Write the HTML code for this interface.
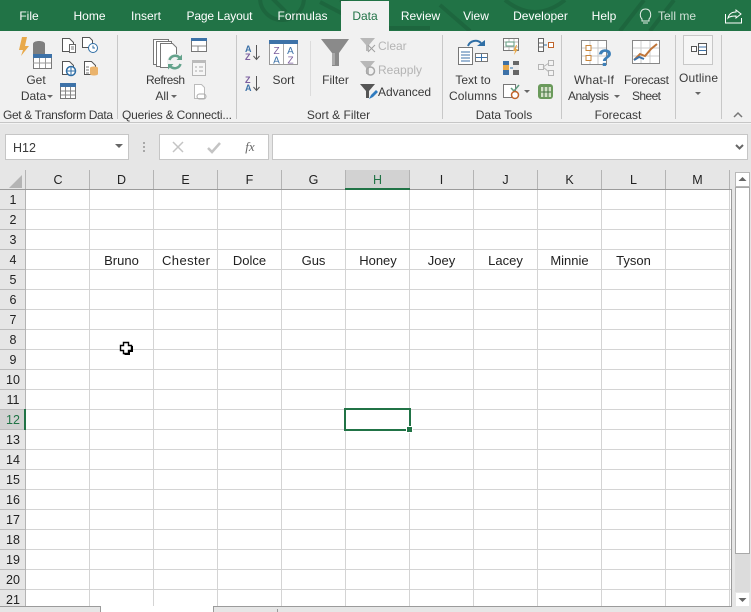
<!DOCTYPE html>
<html><head><meta charset="utf-8"><style>
html,body{margin:0;padding:0;background:#fff;width:751px;height:612px;overflow:hidden}
svg{display:block}
text{font-family:"Liberation Sans",sans-serif;font-size:12px;fill:#3a3a3a}
.t text{fill:#fff;font-size:12px;text-anchor:middle}
.c{text-anchor:middle}
.d{fill:#b4b4b4}
.h{font-size:12.5px;fill:#222;text-anchor:middle}
.cell{font-size:13px;fill:#222;text-anchor:middle}
.g{stroke:#d4d4d4;stroke-width:1}
</style></head><body>
<svg width="751" height="612" viewBox="0 0 751 612" xmlns="http://www.w3.org/2000/svg">
<rect width="751" height="612" fill="#fff"/>
<!-- title -->
<rect width="751" height="31" fill="#217346"/>
<g fill="none" stroke="#1d663e" stroke-width="4">
<circle cx="282" cy="-2" r="22"/><path d="M270 -4l16 16M320 2l50 26h60M340 0l40 12M440 5l30 26"/><path d="M505 0q30 24 60 0M620 31l24-31M650 31l24-31"/>
</g>
<rect x="341" y="1" width="48" height="31" fill="#f1f1f1"/>
<g class="t">
<text x="29" y="20">File</text><text x="89.500" y="20">Home</text><text x="146" y="20">Insert</text><text x="219.500" y="20" textLength="66">Page Layout</text><text x="302.500" y="20">Formulas</text>
<text x="365" y="20" style="fill:#217346">Data</text><text x="420.500" y="20">Review</text><text x="476" y="20">View</text><text x="540.500" y="20">Developer</text><text x="604" y="20">Help</text><text x="677" y="20" style="fill:#cfe0d6">Tell me</text>
</g>
<path d="M642 19c-3-3-2-10 3.500-10s6.500 7 3.500 10v2h-7zM643 23h5" fill="none" stroke="#e4efe8"/>
<path d="M725.500 14v9h16v-5M728 18c1-4 4-6 8-6v-2l5 4-5 4v-2c-3 0-6 0-8 2z" fill="none" stroke="#fff"/>
<!-- ribbon -->
<rect y="31" width="751" height="92" fill="#f1f1f1"/>
<rect y="122" width="751" height="1" fill="#c6c6c6"/>
<rect y="123" width="751" height="1" fill="#f4f4f4"/>
<g fill="#c8c8c8"><rect x="117" y="35" width="1" height="84"/><rect x="236" y="35" width="1" height="84"/><rect x="442" y="35" width="1" height="84"/><rect x="561" y="35" width="1" height="84"/><rect x="675" y="35" width="1" height="84"/><rect x="721" y="35" width="1" height="84"/><rect x="310" y="41" width="1" height="55" fill="#dcdcdc"/></g>
<!-- get data -->
<path d="M27 37h-5l-3 13h4l-2 6 8-10h-4z" fill="#e8a94a"/>
<path d="M33 44c0-4 12-4 12 0v17H33z" fill="#7f7f7f"/>
<rect x="33.500" y="54.500" width="18" height="14" fill="#fff" stroke="#7a7a7a"/><rect x="33" y="54" width="19" height="4" fill="#3d72a8"/>
<path d="M33 63h18M39.500 58v10M45.500 58v10" stroke="#999" fill="none"/>
<g fill="#fff" stroke="#555"><path d="M62.500 38.500h7l4 4v9h-11z"/><path d="M82.500 37.500h7l3 3v7h-10z"/><path d="M62.500 61.500h7l4 4v9h-11z"/><path d="M84.500 61.500h7l4 4v9h-11z"/></g>
<rect x="69.500" y="44.500" width="6" height="8" fill="#fff" stroke="#666"/><path d="M71 47h3M71 49h3" stroke="#777"/>
<circle cx="93" cy="48" r="4.500" fill="#fff" stroke="#2f6ea5"/><path d="M93 45.500V48h2" stroke="#2f6ea5" fill="none"/>
<circle cx="71" cy="71" r="4.500" fill="#fff" stroke="#2f6ea5" stroke-width="1.500"/><path d="M66.500 71h9M71 66.500v9" stroke="#2f6ea5"/>
<path d="M86 67h3M86 70h3M86 73h3" stroke="#777"/><path d="M90 68c0-2 8-2 8 0v6c0 2-8 2-8 0z" fill="#eab36c"/>
<rect x="60.500" y="83.500" width="15" height="15" fill="#fff" stroke="#777"/><rect x="60" y="83" width="16" height="4" fill="#3d72a8"/><path d="M61 91h14M61 95h14M65.500 87v11M70.500 87v11" stroke="#888"/>
<text x="36" y="84" class="c">Get</text><text x="33.500" y="100" class="c">Data</text><path d="M47 95h6l-3 3z" fill="#666"/>
<text x="58" y="119" class="c" textLength="110" style="font-size:12px">Get &amp; Transform Data</text>
<!-- refresh -->
<g fill="#fff" stroke="#777"><rect x="153.500" y="39.500" width="15" height="25"/><rect x="156.500" y="41.500" width="15" height="25"/><path d="M160.500 43.500h12l4 4v20h-16z"/></g>
<circle cx="175" cy="62" r="8" fill="#f1f1f1"/>
<path d="M169.500 60a6 6 0 0 1 10-2.500" fill="none" stroke="#63a28b" stroke-width="2.500"/><path d="M176.500 60h5.500v-5.500z" fill="#63a28b"/>
<path d="M180.500 64a6 6 0 0 1-10 2.500" fill="none" stroke="#63a28b" stroke-width="2.500"/><path d="M173.500 64H168v5.500z" fill="#63a28b"/>
<rect x="191.500" y="38.500" width="15" height="13" fill="#fff" stroke="#777"/><rect x="191" y="38" width="16" height="3" fill="#3d72a8"/><path d="M192 46h14M198 46v5" stroke="#888"/>
<rect x="192.500" y="60.500" width="13" height="15" fill="#f6f6f6" stroke="#b5b5b5"/><rect x="192" y="60" width="14" height="3" fill="#bbb"/><path d="M195 67h2M199 67h4M195 71h2M199 71h4" stroke="#aaa"/>
<path d="M194.500 84.500h7l3 3v11h-10z" fill="#fff" stroke="#bbb"/><rect x="197" y="94" width="9" height="5" rx="2.500" fill="none" stroke="#aaa"/>
<text x="165.500" y="84" class="c" textLength="39">Refresh</text><text x="162" y="100" class="c">All</text><path d="M171 95h6l-3 3z" fill="#666"/>
<text x="177" y="119" class="c" textLength="110">Queries &amp; Connecti...</text>
<!-- sort -->
<g style="font-weight:bold"><text x="245" y="52" style="font-size:9px;fill:#3d72a8;font-weight:bold">A</text><text x="245" y="60" style="font-size:9px;fill:#7b5e9e;font-weight:bold">Z</text><text x="245" y="83" style="font-size:9px;fill:#7b5e9e;font-weight:bold">Z</text><text x="245" y="91" style="font-size:9px;fill:#3d72a8;font-weight:bold">A</text></g>
<path d="M256.500 45v14M253.500 56l3 3.500 3-3.500M256.500 76v14M253.500 87l3 3.500 3-3.500" fill="none" stroke="#555"/>
<rect x="269.500" y="40.500" width="28" height="24" fill="#fff" stroke="#999"/><rect x="269" y="40" width="29" height="4" fill="#3d72a8"/><path d="M283.500 44v20" stroke="#aaa"/>
<text x="276.500" y="54" class="c" style="font-size:10px;fill:#7b5e9e">Z</text><text x="276.500" y="63.500" class="c" style="font-size:10px;fill:#3d72a8">A</text><text x="290.500" y="54" class="c" style="font-size:10px;fill:#3d72a8">A</text><text x="290.500" y="63.500" class="c" style="font-size:10px;fill:#7b5e9e">Z</text>
<text x="283.500" y="84" class="c">Sort</text>
<path d="M321 39h28l-10 14v13h-7V53z" fill="#8a8a8a"/><path d="M332 53h3v12h-3z" fill="#aaa"/>
<text x="335.500" y="84" class="c">Filter</text>
<path d="M360 38h15l-6 7v6h-3v-6z" fill="#b8b8b8"/><path d="M368 45l7 7m0-7l-7 7" stroke="#a0a0a0"/>
<path d="M360 61h15l-6 7v6h-3v-6z" fill="#b8b8b8"/><circle cx="370.500" cy="71" r="4" fill="none" stroke="#a8a8a8" stroke-width="1.500"/>
<path d="M360 84h15l-6 7v7h-3v-7z" fill="#555"/><path d="M369 99l2-4 5-5 2 2-5 5z" fill="#2f7bbf"/>
<text x="378" y="50" class="d">Clear</text><text x="378" y="74" class="d">Reapply</text><text x="378" y="96" textLength="53">Advanced</text>
<text x="338.500" y="119" class="c">Sort &amp; Filter</text>
<!-- data tools -->
<rect x="458.500" y="47.500" width="14" height="17" fill="#fff" stroke="#777"/><path d="M461 52h9M461 55h9M461 58h9M461 61h9" stroke="#3d72a8"/>
<rect x="475.500" y="53.500" width="12" height="8" fill="#fff" stroke="#777"/><path d="M476 57.500h11M481.500 54v7" stroke="#3d72a8"/>
<path d="M468 46a8 8 0 0 1 13-3" fill="none" stroke="#2f6ea5" stroke-width="2"/><path d="M477 46h8v-6z" fill="#2f6ea5"/>
<text x="473" y="84" class="c">Text to</text><text x="473" y="100" class="c" textLength="48">Columns</text>
<rect x="503.500" y="38.500" width="15" height="12" fill="#fff" stroke="#777"/><path d="M504 42h14M504 47h14M509 39v11M514 39v11" stroke="#bbb"/><rect x="506" y="42" width="8" height="4" fill="#fff" stroke="#5f9b7f"/><path d="M516 45l-3 6h2l-1 4 4-6h-2l1-4z" fill="#e8a94a"/>
<rect x="503" y="61" width="6" height="14" fill="#3d72a8"/><rect x="513" y="61" width="6" height="14" fill="#666"/><rect x="503" y="65" width="6" height="5" fill="#e8a94a"/><rect x="513" y="65" width="6" height="5" fill="#e8e8e8"/><path d="M510 68h3" stroke="#2f6ea5"/>
<rect x="503.500" y="84.500" width="12" height="13" fill="#fff" stroke="#777"/><path d="M511 88l3 3 5-6" fill="none" stroke="#5f9b7f" stroke-width="1.500"/><circle cx="515" cy="95" r="3.500" fill="#fff" stroke="#c0642b" stroke-width="1.500"/>
<path d="M524 90h6l-3 3z" fill="#666"/>
<rect x="538.500" y="38.500" width="5" height="13" fill="#fff" stroke="#666"/><path d="M539 43h4M539 47h4" stroke="#666"/><rect x="548.500" y="42.500" width="5" height="5" fill="#fff" stroke="#c0642b"/><path d="M544 45h3" stroke="#2f6ea5"/>
<g fill="#f3f3f3" stroke="#b5b5b5"><rect x="538.500" y="64.500" width="5" height="5"/><rect x="548.500" y="60.500" width="5" height="5"/><rect x="548.500" y="70.500" width="5" height="5"/></g><path d="M543 67l6-4M543 67l6 5" stroke="#b5b5b5"/>
<rect x="538" y="84" width="15" height="15" rx="3" fill="#6a9a5b"/><rect x="541" y="87" width="10" height="10" fill="#d4e2c8"/><path d="M544 87v10M548 87v10M541 92h10" stroke="#3f6f3a"/>
<text x="504" y="119" class="c">Data Tools</text>
<!-- forecast -->
<rect x="581.500" y="40.500" width="25" height="24" fill="#fff" stroke="#888"/><path d="M582 48h24M582 56h24M590 41v23M598 41v23" stroke="#c8c8c8"/><rect x="586" y="45.500" width="5" height="5" fill="#fff" stroke="#c8843a"/><rect x="586" y="55.500" width="5" height="5" fill="#fff" stroke="#c8843a"/>
<text x="605" y="66" class="c" style="font-size:24px;font-weight:bold;fill:#3d7fb8">?</text>
<text x="594" y="84" class="c" textLength="40">What-If</text><text x="588.500" y="100" class="c" textLength="41">Analysis</text><path d="M614 95h6l-3 3z" fill="#666"/>
<rect x="632.500" y="40.500" width="27" height="23" fill="#fff" stroke="#888"/><path d="M633 48h26M633 56h26M641 41v22M650 41v22" stroke="#ccc"/>
<path d="M634 60l6-6 5 2 6-7 6-5" fill="none" stroke="#c0763a" stroke-width="2"/><path d="M634 60l5-3 5 2" fill="none" stroke="#3d72a8" stroke-width="2"/>
<text x="646.500" y="84" class="c" textLength="45">Forecast</text><text x="646.500" y="100" class="c" textLength="29">Sheet</text>
<text x="618" y="119" class="c">Forecast</text>
<!-- outline -->
<rect x="683.500" y="35.500" width="29" height="29" fill="#f6f6f6" stroke="#c8c8c8"/>
<rect x="691.500" y="46.500" width="5" height="5" fill="#fff" stroke="#555"/><rect x="698.500" y="43.500" width="8" height="11" fill="#fff" stroke="#555"/><path d="M699 47h7M699 50.500h7" stroke="#3d72a8"/>
<text x="698.500" y="82" class="c" textLength="39">Outline</text><path d="M695 92h6l-3 3z" fill="#666"/>
<path d="M734 117l4-4 4 4" fill="none" stroke="#777" stroke-width="1.500"/>
<!-- formula bar -->
<rect y="124" width="751" height="482" fill="#e6e6e6"/>
<rect x="5.500" y="134.500" width="123" height="25" fill="#fff" stroke="#c6c6c6"/>
<text x="13" y="152" style="font-size:12.500px">H12</text><path d="M115 144h8l-4 4z" fill="#666"/>
<g fill="#a8a8a8"><rect x="143" y="142" width="2" height="2"/><rect x="143" y="146" width="2" height="2"/><rect x="143" y="150" width="2" height="2"/></g>
<rect x="159.500" y="134.500" width="109" height="25" fill="#fff" stroke="#c6c6c6"/>
<path d="M173 142l10 10m0-10l-10 10" stroke="#c4c4c4" stroke-width="1.500"/><path d="M208 148l4 4 8-9" fill="none" stroke="#c4c4c4" stroke-width="2.500"/>
<text x="250" y="151" class="c" style="font-family:'Liberation Serif',serif;font-style:italic;font-size:13px;fill:#666">fx</text>
<rect x="272.500" y="134.500" width="475" height="25" fill="#fff" stroke="#c6c6c6"/><path d="M736 145l3.500 3.500 3.500-3.500" fill="none" stroke="#666" stroke-width="2"/>
<!-- grid -->
<rect x="26" y="190" width="705" height="416" fill="#fff"/>
<g class="g" fill="none">
<path d="M89.500 190V606M153.500 190V606M217.500 190V606M281.500 190V606M345.500 190V606M409.500 190V606M473.500 190V606M537.500 190V606M601.500 190V606M665.500 190V606M729.500 190V606"/>
<path d="M26 209.500H731M26 229.500H731M26 249.500H731M26 269.500H731M26 289.500H731M26 309.500H731M26 329.500H731M26 349.500H731M26 369.500H731M26 389.500H731M26 409.500H731M26 429.500H731M26 449.500H731M26 469.500H731M26 489.500H731M26 509.500H731M26 529.500H731M26 549.500H731M26 569.500H731M26 589.500H731"/>
</g>
<!-- col headers -->
<path d="M9 188H22V175z" fill="#b4b4b4"/>
<path d="M25.500 170V606M89.500 170V189M153.500 170V189M217.500 170V189M281.500 170V189M345.500 170V189M409.500 170V189M473.500 170V189M537.500 170V189M601.500 170V189M665.500 170V189M729.500 170V189" stroke="#b4b4b4" fill="none"/>
<rect x="0" y="189" width="731.500" height="1" fill="#9b9b9b"/><rect x="731" y="189" width="1" height="418" fill="#9b9b9b"/><rect x="0" y="606" width="732" height="1" fill="#9b9b9b"/>
<rect x="346" y="170" width="63" height="19" fill="#d2d2d2"/><rect x="345" y="188" width="65" height="2" fill="#217346"/>
<text x="58" y="184" class="h">C</text><text x="121.500" y="184" class="h">D</text><text x="185.500" y="184" class="h">E</text><text x="249.500" y="184" class="h">F</text><text x="313.500" y="184" class="h">G</text><text x="377.500" y="184" class="h" style="fill:#217346">H</text><text x="441.500" y="184" class="h">I</text><text x="505.500" y="184" class="h">J</text><text x="569.500" y="184" class="h">K</text><text x="633.500" y="184" class="h">L</text><text x="697.500" y="184" class="h">M</text>
<!-- row headers -->
<path d="M0 209.500H25M0 229.500H25M0 249.500H25M0 269.500H25M0 289.500H25M0 309.500H25M0 329.500H25M0 349.500H25M0 369.500H25M0 389.500H25M0 409.500H25M0 429.500H25M0 449.500H25M0 469.500H25M0 489.500H25M0 509.500H25M0 529.500H25M0 549.500H25M0 569.500H25M0 589.500H25" stroke="#bcbcbc"/>
<rect x="0" y="410" width="24" height="19" fill="#d2d2d2"/><rect x="24" y="409" width="2" height="21" fill="#217346"/>
<g>
<text x="13" y="204" class="h">1</text><text x="13" y="224" class="h">2</text><text x="13" y="244" class="h">3</text><text x="13" y="264" class="h">4</text><text x="13" y="284" class="h">5</text><text x="13" y="304" class="h">6</text><text x="13" y="324" class="h">7</text><text x="13" y="344" class="h">8</text><text x="13" y="364" class="h">9</text><text x="13" y="384" class="h">10</text><text x="13" y="404" class="h">11</text><text x="13" y="424" class="h" style="fill:#217346">12</text><text x="13" y="444" class="h">13</text><text x="13" y="464" class="h">14</text><text x="13" y="484" class="h">15</text><text x="13" y="504" class="h">16</text><text x="13" y="524" class="h">17</text><text x="13" y="544" class="h">18</text><text x="13" y="564" class="h">19</text><text x="13" y="584" class="h">20</text><text x="13" y="604" class="h">21</text>
</g>
<!-- cells -->
<text x="121.500" y="265" class="cell">Bruno</text><text x="186" y="265" class="cell" textLength="48">Chester</text><text x="249.500" y="265" class="cell">Dolce</text><text x="313.500" y="265" class="cell">Gus</text><text x="378" y="265" class="cell">Honey</text><text x="441.500" y="265" class="cell">Joey</text><text x="505.500" y="265" class="cell">Lacey</text><text x="569.500" y="265" class="cell">Minnie</text><text x="633.500" y="265" class="cell">Tyson</text>
<!-- selection -->
<rect x="345" y="409" width="65" height="21" fill="none" stroke="#217346" stroke-width="2"/>
<rect x="406" y="426" width="7" height="7" fill="#fff"/><rect x="407" y="427" width="5" height="5" fill="#217346"/>
<!-- cursor -->
<path d="M123.500 342.500h5v3h3v5h-3v3h-5v-3h-3v-5h3z" fill="#fff" stroke="#000" stroke-width="1.400"/><path d="M132.500 346v5.500h-3v3h-5" fill="none" stroke="#000"/>
<!-- scrollbar -->
<rect x="733" y="170" width="18" height="436" fill="#e6e6e6"/>
<rect x="735" y="172" width="15" height="434" fill="#dcdcdc"/>
<rect x="735.500" y="172.500" width="14" height="14" fill="#fff" stroke="#b8b8b8"/><path d="M738.500 181h8l-4-4z" fill="#666"/>
<rect x="735.500" y="187.500" width="14" height="366" fill="#fff" stroke="#a8a8a8"/>
<rect x="735.500" y="592.500" width="14" height="14" fill="#fff" stroke="#e6e6e6"/><path d="M738.500 598h8l-4 4z" fill="#666"/>
<!-- tabs -->
<rect y="606" width="751" height="6" fill="#e6e6e6"/>
<rect y="606" width="100" height="1" fill="#9b9b9b"/>
<rect x="100" y="606" width="1" height="6" fill="#9b9b9b"/>
<rect x="101" y="606" width="112" height="6" fill="#fff"/>
<rect x="213" y="606" width="1" height="6" fill="#9b9b9b"/>
<rect x="214" y="606" width="518" height="1" fill="#9b9b9b"/>
<rect x="277" y="609" width="1" height="3" fill="#9b9b9b"/>
</svg>
</body></html>
